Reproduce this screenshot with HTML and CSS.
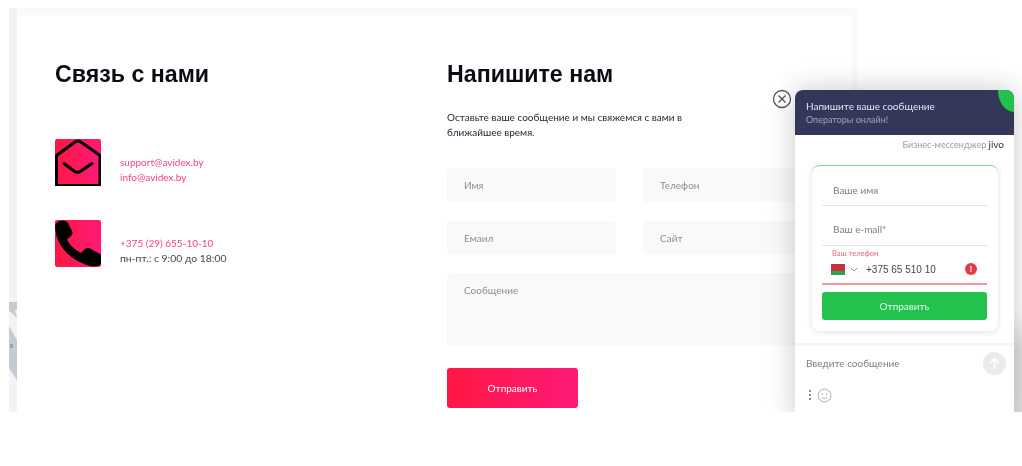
FILE: index.html
```html
<!DOCTYPE html>
<html lang="ru">
<head>
<meta charset="utf-8">
<title>Связь с нами</title>
<link rel="stylesheet" href="styles.css">
</head>
<body>
<div class="stage">
  <svg class="map-left" viewBox="0 0 8 78" preserveAspectRatio="none"><rect width="8" height="78" fill="#f3f3f3"/><path d="M0 0 H8 V8 H6 L8 16 L3 11 L0 9 Z" fill="#c6cad1"/><path d="M0 24 L8 38 V78 L0 66 Z" fill="#c3ccd6"/><rect x="1" y="42" width="3" height="4" fill="#9aa3ae"/></svg>
  <div class="map-right"></div>
  <main class="card">
    <section class="contacts">
      <h2 class="title">Связь с нами</h2>
      <div class="contact contact-mail">
        <svg class="tile" viewBox="0 0 46 47"><defs><linearGradient id="g1" x1="0" x2="1"><stop offset="0" stop-color="#ff1744"/><stop offset="1" stop-color="#fe1a78"/></linearGradient></defs><rect width="46" height="47" rx="2" fill="url(#g1)"/><path d="M1.500 16.500 L20 3 Q23 1 26 3 L45 16.500 V46.500 H1.500 Z" fill="none" stroke="#000" stroke-width="3" stroke-linejoin="round"/><path d="M9 24.500 L19 32 Q22.500 34.500 26 32 L37 24.500" fill="none" stroke="#000" stroke-width="3" stroke-linecap="round"/></svg>
        <div class="lines">
          <a class="pink">support@avidex.by</a>
          <a class="pink">info@avidex.by</a>
        </div>
      </div>
      <div class="contact contact-phone">
        <svg class="tile" viewBox="0 0 46 47"><defs><linearGradient id="g2" x1="0" x2="1"><stop offset="0" stop-color="#ff1744"/><stop offset="1" stop-color="#fe1a78"/></linearGradient></defs><rect width="46" height="47" rx="2" fill="url(#g2)"/><path d="M0 5 Q3 0 8 0.500 Q12 1 13 3 L17.500 12 Q18 15 15 17 L12 19.500 Q15 27 26 33 L30 29 Q32 27 35 28.500 L45 34 L46 35 V44 Q44 46.500 38 46.500 Q18 43 6 26 Q0 16 0 5 Z" fill="#000"/></svg>
        <div class="lines">
          <a class="pink">+375 (29) 655-10-10</a>
          <span class="dark">пн-пт.: с 9:00 до 18:00</span>
        </div>
      </div>
    </section>
    <section class="write">
      <h2 class="title">Напишите нам</h2>
      <p class="lead">Оставьте ваше сообщение и мы свяжемся с вами в ближайшее время.</p>
      <form class="form">
        <div class="field">Имя</div>
        <div class="field">Телефон</div>
        <div class="field">Емаил</div>
        <div class="field">Сайт</div>
        <div class="field field-wide">Сообщение</div>
      </form>
      <div class="send">Отправить</div>
    </section>
  </main>

  <svg class="close" viewBox="0 0 20 20"><circle cx="10" cy="10" r="8.500" fill="#fff" stroke="#555" stroke-width="1.300"/><path d="M6.500 6.500 L13.500 13.500 M13.500 6.500 L6.500 13.500" stroke="#555" stroke-width="1.300"/></svg>
  <aside class="chat">
    <header class="chat-head">
      <div class="chat-title">Напишите ваше сообщение</div>
      <div class="chat-sub">Операторы онлайн!</div>
      <span class="chat-corner"></span>
    </header>
    <div class="brand"><span>Бизнес-мессенджер</span> <b>jivo</b></div>
    <div class="chat-card">
      <div class="input input-name">Ваше имя</div>
      <div class="input input-mail">Ваш e-mail*</div>
      <div class="phone-label">Ваш телефон</div>
      <div class="phone-row">
        <span class="flag"></span>
        <svg class="chev" viewBox="0 0 10 6"><path d="M1 1 L5 5 L9 1" fill="none" stroke="#888" stroke-width="1.200"/></svg>
        <span class="phone-num">+375 65 510 10</span>
        <span class="err">!</span>
      </div>
      <div class="chat-send">Отправить</div>
    </div>
    <div class="composer">
      <div class="composer-top">
        <span class="placeholder">Введите сообщение</span>
        <span class="up"><svg viewBox="0 0 22 22"><path d="M11 16 V7 M7 10.500 L11 6.500 L15 10.500" fill="none" stroke="#fff" stroke-width="1.800"/></svg></span>
      </div>
      <div class="composer-tools">
        <span class="dots"><i></i><i></i><i></i></span>
        <svg class="smile" viewBox="0 0 16 16"><circle cx="8" cy="8" r="6.800" fill="none" stroke="#a5abb1" stroke-width="1"/><circle cx="5.700" cy="6.500" r=".8" fill="#a5abb1"/><circle cx="10.300" cy="6.500" r=".8" fill="#a5abb1"/><path d="M5 10 Q8 12.500 11 10" fill="none" stroke="#a5abb1"/></svg>
      </div>
    </div>
  </aside>
</div>
</body>
</html>
```
FILE: styles.css
```css
* { box-sizing: border-box; }
html, body { margin: 0; background: #fff; }
body { width: 1022px; height: 466px; overflow: hidden; font-family: "Lato", "Liberation Sans", sans-serif; }
.stage { position: relative; margin: 0; height: 412px; width: 1022px; overflow: hidden; background: #fff; padding: 8px 164px 0 9px; filter: blur(.45px); }
.stage::before { content: ""; position: absolute; left: 9px; top: 8px; width: 849px; height: 404px; background: linear-gradient(90deg, #f3f3f3 8px, #fbfafb 8px); }
.map-left { position: absolute; left: 9px; top: 302px; width: 8px; height: 78px; display: block; }
.map-right { position: absolute; left: 1014px; top: 310px; width: 8px; height: 102px; background: linear-gradient(180deg, rgba(224,224,224,0), #e0e0e0 40%); }
.card { position: relative; display: flex; margin: 7px 0 0 8px; width: 835px; height: 397px; background: #fff; padding: 43px 0 0 38px; }
.contacts { width: 392px; flex: none; }
.write { flex: 1; }
.title { margin: 0; font: bold 23.200px/32px "Liberation Sans", sans-serif; color: #0b0b14; }
.contact { display: flex; align-items: flex-start; gap: 19px; }
.contact-mail { margin-top: 49px; }
.contact-phone { margin-top: 34px; }
.tile { width: 46px; height: 47px; flex: none; display: block; }
.lines { display: flex; flex-direction: column; padding-top: 16px; font-size: 10px; line-height: 15px; }
.pink { color: #ff3d7c; }
.dark { color: #45454f; font-size: 10.400px; }
.lead { margin: 20px 0 0; width: 250px; font-size: 10px; line-height: 14.500px; color: #26263a; }
.form { margin-top: 29px; display: grid; grid-template-columns: 169px 169px; column-gap: 27px; row-gap: 19px; width: 400px; }
.field { height: 33.500px; background: #faf9fa; border-radius: 4px; padding: 11px 17px 0; font-size: 10px; line-height: 13px; color: #8d8d92; }
.field-wide { grid-column: 1 / -1; height: 73px; }
.send { margin-top: 22px; width: 131px; height: 40px; border-radius: 3px; background: linear-gradient(90deg, #ff1744, #fe1a78); color: #fff; font-size: 10px; line-height: 40px; text-align: center; }
.close { position: absolute; left: 772px; top: 89px; width: 20px; height: 20px; }
.chat { position: absolute; left: 795px; top: 90px; width: 219px; height: 330px; background: #fff; border-radius: 8px 8px 0 0; box-shadow: 0 0 28px rgba(0,0,0,.22); display: flex; flex-direction: column; }
.chat-head { position: relative; overflow: hidden; height: 45px; border-radius: 8px 8px 0 0; background: #35375a; padding: 9px 0 0 11px; }
.chat-title { font-size: 10px; line-height: 15px; color: #e4e4ee; }
.chat-sub { font-size: 9px; line-height: 12px; color: #a0a1ba; }
.chat-corner { position: absolute; right: 0; top: 0; width: 16px; height: 22px; border-bottom-left-radius: 100%; background: #23c24c; }
.brand { height: 18px; padding-right: 10px; text-align: right; font-size: 9px; line-height: 18px; color: #9a9aa2; }
.brand b { color: #333; font-weight: 400; font-size: 10px; }
.chat-card { margin: 12px 16px 0 17px; height: 166px; border-radius: 8px; border-top: 1px solid #7fdc98; background: #fff; box-shadow: 0 1px 6px rgba(0,0,0,.12); padding: 0 11px 0 10px; }
.input { font-size: 10px; line-height: 13px; color: #7d7d84; border-bottom: 1px solid #e4e4e4; padding: 0 0 0 11px; }
.input-name { height: 40px; padding-top: 18px; }
.input-mail { height: 40px; padding-top: 17px; }
.phone-label { margin-top: 3px; font-size: 7.500px; line-height: 10px; color: #f0627c; padding-left: 10px; }
.phone-row { display: flex; align-items: center; height: 26px; border-bottom: 2px solid #f39aa0; padding: 0 0 4px 9px; }
.flag { width: 14px; height: 11px; background: linear-gradient(180deg, #c8303a 0 62%, #2ba24c 62%); }
.chev { width: 8px; height: 5px; margin-left: 5px; }
.phone-num { margin-left: 8px; flex: 1; font: 10px/13px "Liberation Sans", sans-serif; color: #46464e; }
.err { width: 12px; height: 12px; margin-right: 10px; border-radius: 50%; background: #e53946; color: #fff; font: bold 9px/12px "Liberation Sans", sans-serif; text-align: center; }
.chat-send { margin-top: 7px; height: 28px; border-radius: 3px; background: #23c24c; color: #e9f9ee; font-size: 10px; line-height: 28px; text-align: center; }
.composer { margin-top: 12px; border-top: 3px solid #f5f5f5; padding: 0 8px 0 11px; }
.composer-top { display: flex; align-items: center; justify-content: space-between; height: 34px; font-size: 10px; color: #7d7d84; }
.up { width: 23px; height: 23px; border-radius: 50%; background: #ebebeb; }
.up svg { display: block; width: 23px; height: 23px; }
.composer-tools { display: flex; align-items: center; gap: 6px; height: 22px; margin-top: 4px; padding-left: 3px; }
.dots { display: flex; flex-direction: column; gap: 2px; }
.dots i { display: block; width: 2px; height: 2px; background: #8a8a8a; }
.smile { width: 15px; height: 15px; }
```
